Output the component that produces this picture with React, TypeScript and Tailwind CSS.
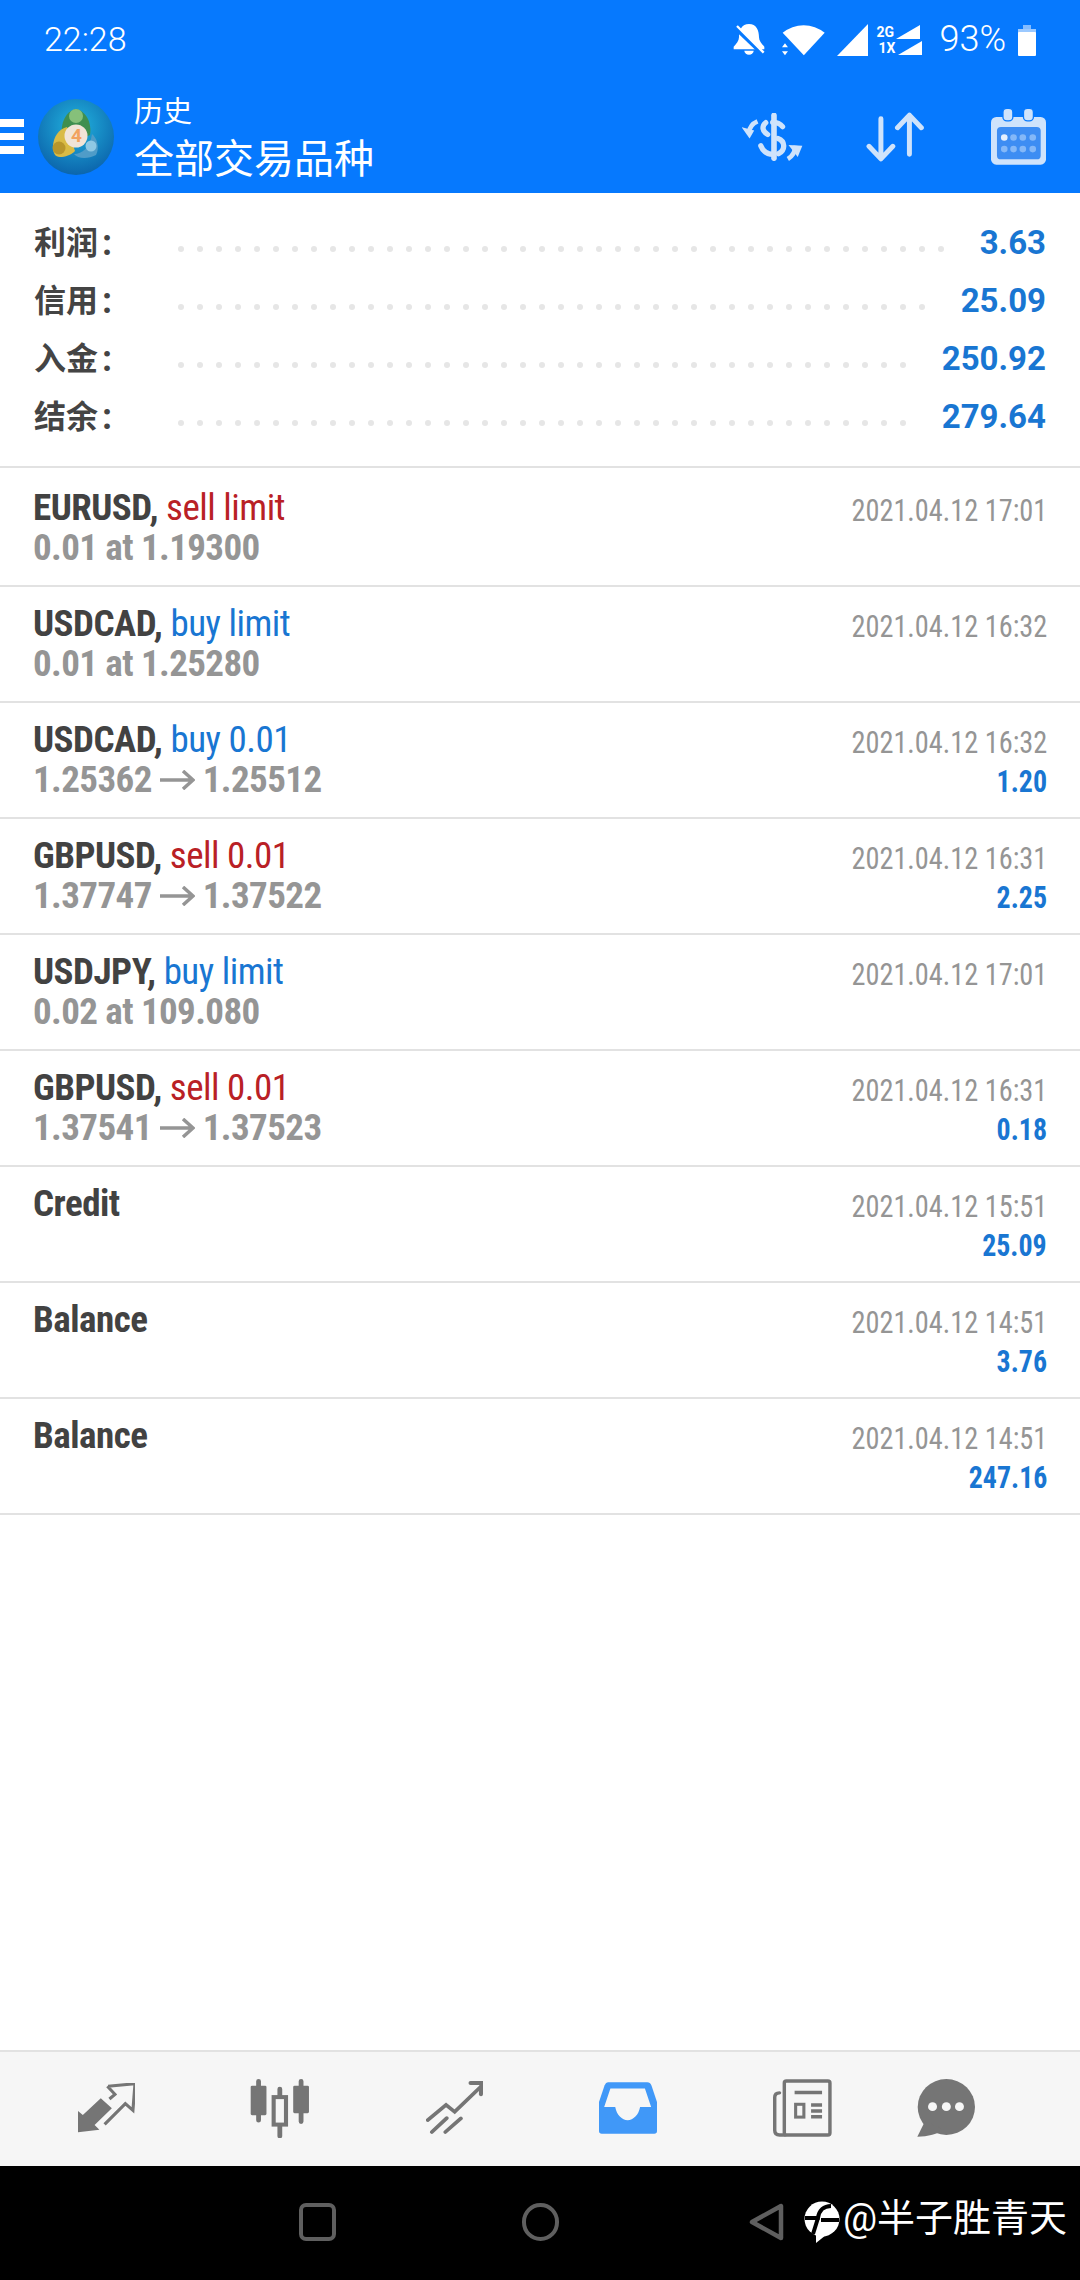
const cjk = "font-['Roboto','Noto_Sans_CJK_SC',sans-serif]"

const summary = [
  { label: "利润", value: "3.63", dots: 41 },
  { label: "信用", value: "25.09", dots: 40 },
  { label: "入金", value: "250.92", dots: 39 },
  { label: "结余", value: "279.64", dots: 39 },
]

type Deal = { pair: string; action?: string; tone?: "buy" | "sell"; detail?: string; date: string; amount?: string }

const deals: Deal[] = [
  { pair: "EURUSD,", action: "sell limit", tone: "sell", detail: "0.01 at 1.19300", date: "2021.04.12 17:01" },
  { pair: "USDCAD,", action: "buy limit", tone: "buy", detail: "0.01 at 1.25280", date: "2021.04.12 16:32" },
  { pair: "USDCAD,", action: "buy 0.01", tone: "buy", detail: "1.25362 → 1.25512", date: "2021.04.12 16:32", amount: "1.20" },
  { pair: "GBPUSD,", action: "sell 0.01", tone: "sell", detail: "1.37747 → 1.37522", date: "2021.04.12 16:31", amount: "2.25" },
  { pair: "USDJPY,", action: "buy limit", tone: "buy", detail: "0.02 at 109.080", date: "2021.04.12 17:01" },
  { pair: "GBPUSD,", action: "sell 0.01", tone: "sell", detail: "1.37541 → 1.37523", date: "2021.04.12 16:31", amount: "0.18" },
  { pair: "Credit", date: "2021.04.12 15:51", amount: "25.09" },
  { pair: "Balance", date: "2021.04.12 14:51", amount: "3.76" },
  { pair: "Balance", date: "2021.04.12 14:51", amount: "247.16" },
]

function StatusBar() {
  return (
    <div className="h-[80px] flex items-center text-white">
      <span className="ml-[44px] mb-[2px] text-[34px] font-light font-['Roboto',sans-serif]">22:28</span>
      <div className="ml-auto flex items-center">
        <svg viewBox="100 72 96 96" className="w-[32px] h-[32px]">
          <path d="M148 72c-22 0-30 18-30 40 0 10-8 20-16 28v8h92v-8c-8-8-16-18-16-28 0-22-8-40-30-40z" fill="white" />
          <path d="M134 152a14 12 0 0 0 28 0z" fill="white" />
          <path d="M104 80l88 84" stroke="#0679fe" strokeWidth="14" />
          <path d="M112 78l80 80" stroke="white" strokeWidth="7" />
        </svg>
        <svg viewBox="245 72 130 96" className="ml-[17px] w-[43px] h-[32px]">
          <path d="M247 98a100 100 0 0 1 127 0l-63 68z" fill="white" />
          <path d="M254 130l9 12h-18zM254 166l9-12h-18z" fill="white" />
        </svg>
        <svg viewBox="0 0 31 32" className="ml-[12px] w-[31px] h-[32px]">
          <path d="M31 0v32H0z" fill="white" />
        </svg>
        <div className="ml-[9px] flex flex-col text-[14px] leading-[16px] font-bold font-['Roboto',sans-serif]">
          <span className="flex items-center">2G<svg viewBox="0 0 24 14" className="ml-[2px] w-[24px] h-[14px]"><path d="M24 0v14H0z" fill="white" /></svg></span>
          <span className="flex items-center pl-[2px]">1X<svg viewBox="0 0 24 14" className="ml-[3px] w-[24px] h-[14px]"><path d="M24 0v14H0z" fill="white" /></svg></span>
        </div>
        <span className="ml-[17px] mb-[2px] text-[36px] font-light font-['Roboto',sans-serif]">93%</span>
        <svg viewBox="0 0 18 31" className="ml-[12px] mr-[44px] w-[18px] h-[31px]">
          <rect x="5" y="0" width="8" height="4" fill="white" opacity="0.5" />
          <rect x="0" y="4" width="18" height="4" fill="white" opacity="0.6" />
          <rect x="0" y="7" width="18" height="24" rx="1" fill="white" />
        </svg>
      </div>
    </div>
  )
}

function Mt4Logo() {
  return (
    <div className="relative w-[76px] h-[76px] shrink-0">
      <svg viewBox="0 0 76 76" className="w-[76px] h-[76px]">
        <defs>
          <radialGradient id="mt" cx="50%" cy="35%" r="70%">
            <stop offset="0%" stopColor="#22b4df" />
            <stop offset="100%" stopColor="#0a5fa8" />
          </radialGradient>
        </defs>
        <circle cx="38" cy="38" r="38" fill="url(#mt)" />
        <path d="M24 38c-2-14 4-26 14-28 10 2 16 14 14 26l-14 6z" fill="#3f8f4f" />
        <circle cx="38" cy="17" r="7" fill="#86c07a" />
        <path d="M15 48c0-10 6-18 14-20l8 24c-4 4-10 6-15 6s-7-4-7-10z" fill="#d9bb45" />
        <circle cx="21" cy="49" r="6.5" fill="#b8962c" />
        <path d="M36 55c8 0 16-6 18-20 5 4 8 14 4 21-8 4-18 4-22-1z" fill="#4f9cc8" />
        <circle cx="53" cy="47" r="5.5" fill="#8fc8e4" />
        <circle cx="38" cy="37" r="11.5" fill="#f1e4d6" />
      </svg>
      <span className="absolute left-[33px] top-[24px] text-[19px] leading-[26px] font-bold text-[#f2a260] font-['Roboto',sans-serif]">4</span>
    </div>
  )
}

function Header() {
  return (
    <div className="h-[193px] shrink-0 bg-[#0679fe]">
      <StatusBar />
      <div className="h-[113px] flex items-center">
        <div className="w-[24px] h-[35px] flex flex-col justify-between">
          <div className="h-[8px] bg-white" />
          <div className="h-[7px] bg-white" />
          <div className="h-[8px] bg-white" />
        </div>
        <div className="ml-[14px]">
          <Mt4Logo />
        </div>
        <div className={`ml-[20px] text-white ${cjk}`}>
          <div className="text-[29px] leading-[40px]">历史</div>
          <div className="mt-[6px] text-[40px] leading-[44px]">全部交易品种</div>
        </div>
        <div className="ml-auto mr-[34px] flex items-center">
          <svg viewBox="125 335 185 145" className="w-[61px] h-[48px]" fill="none" stroke="#cfe3fb">
            <path d="M222 342v130" strokeWidth="17" strokeLinecap="round" />
            <path d="M248 376c-8-10-18-13-30-13M197 364c-12 10-12 26 6 36M182 434c6 16 20 26 38 26M234 412c22 8 24 34 2 46" strokeWidth="16" strokeLinecap="round" />
            <path d="M172 360c-14 6-24 16-26 34" strokeWidth="14" />
            <path d="M124 378l38 10-14 24z" fill="#cfe3fb" stroke="none" />
            <path d="M264 474c14-8 22-22 24-40" strokeWidth="14" />
            <path d="M266 432l42 2-14 34z" fill="#cfe3fb" stroke="none" />
          </svg>
          <svg viewBox="497 335 175 150" className="ml-[63px] w-[58px] h-[50px]" fill="none" stroke="#cfe3fb" strokeWidth="15" strokeLinecap="round" strokeLinejoin="round">
            <path d="M542 355v120M506 438l36 38 36-38" />
            <path d="M628 462V345M592 382l36-38 36 38" />
          </svg>
          <svg viewBox="872 322 166 170" className="ml-[67px] w-[55px] h-[57px]">
            <rect x="872" y="348" width="166" height="144" rx="16" fill="#cfe3fb" />
            <rect x="890" y="378" width="132" height="98" rx="12" fill="#3d8df3" />
            <rect x="908" y="322" width="30" height="38" rx="12" fill="#cfe3fb" stroke="#0679fe" strokeWidth="4" />
            <rect x="970" y="322" width="30" height="38" rx="12" fill="#cfe3fb" stroke="#0679fe" strokeWidth="4" />
            <circle cx="912" cy="410" r="10" fill="#e6f0fd" />
            {[940, 968, 998].map((x) => (
              <circle key={x} cx={x} cy="410" r="10" fill="#84b8f8" />
            ))}
            {[912, 940, 968, 998].map((x) => (
              <circle key={x} cx={x} cy="445" r="10" fill="#84b8f8" />
            ))}
          </svg>
        </div>
      </div>
    </div>
  )
}

function Summary() {
  return (
    <div className="h-[275px] shrink-0 box-border border-b-2 border-[#e2e2e2] pt-[27px] pl-[34px] pr-[34px]">
      {summary.map((row) => (
        <div key={row.label} className="h-[58px] flex items-center">
          <span className={`w-[144px] shrink-0 pb-[13px] flex items-center text-[32px] font-bold text-[#444444] ${cjk}`}>
            {row.label}
            <span className="ml-[4px] text-[36px] leading-[36px]">:</span>
          </span>
          <div className="flex gap-[13px]">
            {Array.from({ length: row.dots }).map((_, i) => (
              <div key={i} className="w-[6px] h-[6px] rounded-full bg-[#e6e6e6]" />
            ))}
          </div>
          <span className="ml-auto pb-[12px] text-[33px] font-bold text-[#1976d2] font-['Roboto',sans-serif]">{row.value}</span>
        </div>
      ))}
    </div>
  )
}

function Detail({ text }: { text: string }) {
  const parts = text.split(" → ")
  if (parts.length < 2) return <>{text}</>
  return (
    <span className="flex items-center">
      {parts[0]}
      <svg viewBox="0 0 35 20" className="ml-[8px] mr-[8px] w-[35px] h-[20px]" fill="none" stroke="#959595" strokeWidth="3.5">
        <path d="M0 10h33M23 1l10 9-10 9" />
      </svg>
      {parts[1]}
    </span>
  )
}

function DealRow({ deal, first }: { deal: Deal; first: boolean }) {
  const tone = deal.tone === "sell" ? "text-[#b92025]" : "text-[#1976d2]"
  return (
    <div
      className={`shrink-0 box-border border-b-2 border-[#e2e2e2] flex justify-between pl-[33px] pr-[33px] font-['Roboto',sans-serif] [font-stretch:75%] ${
        first ? "h-[119px] pt-[20px]" : "h-[116px] pt-[17px]"
      }`}
    >
      <div className="leading-[39px] text-[37px]">
        <div className="h-[39px] font-bold text-[#424242] whitespace-pre tracking-[-0.5px]">
          {deal.pair}
          {deal.action && <span className={`font-normal ${tone}`}> {deal.action}</span>}
        </div>
        {deal.detail && (
          <div className="h-[39px] mt-[1px] font-bold text-[#959595] whitespace-pre tracking-[-0.6px]">
            <Detail text={deal.detail} />
          </div>
        )}
      </div>
      <div className="pt-[3px] flex flex-col items-end leading-[39px]">
        <div className="h-[39px] text-[32px] text-[#959595] origin-right scale-x-[0.885]">{deal.date}</div>
        {deal.amount && <div className="h-[39px] text-[31px] font-bold text-[#1976d2] origin-right scale-x-[0.9]">{deal.amount}</div>}
      </div>
    </div>
  )
}

function BottomNav() {
  const cell = "w-[174px] flex justify-center"
  return (
    <div className="h-[116px] shrink-0 box-border border-t-2 border-[#e2e2e2] bg-[#f6f6f6] flex pl-[19px] pt-[27px]">
      <div className={cell}>
        <svg viewBox="225 160 165 150" preserveAspectRatio="none" className="mt-[4px] w-[57px] h-[50px]">
          <path d="M225 308v-64l14 12 52-50 32 30-50 50 14 14z" fill="#757575" />
          <path d="M312 170l78-8-6 80-22-20-60 62M316 208l16-14-22-24" fill="none" stroke="#757575" strokeWidth="9" />
        </svg>
      </div>
      <div className={cell}>
        <svg viewBox="725 145 175 176" preserveAspectRatio="none" className="w-[60px] h-[59px]" stroke="#757575" strokeLinecap="round">
          <path d="M750 152v116M874 152v120M812 175v140" strokeWidth="14" fill="none" />
          <rect x="727" y="165" width="46" height="88" rx="4" fill="#757575" stroke="none" />
          <rect x="851" y="165" width="46" height="82" rx="4" fill="#757575" stroke="none" />
          <rect x="794" y="199" width="36" height="82" fill="#f6f6f6" strokeWidth="12" strokeLinecap="butt" />
        </svg>
      </div>
      <div className={cell}>
        <svg viewBox="1235 150 165 160" preserveAspectRatio="none" className="mt-[2px] w-[57px] h-[53px]" fill="none" stroke="#757575" strokeWidth="11" strokeLinecap="round">
          <path d="M1240 268l53-46 25 21 74-74" />
          <path d="M1364 156h32l-2 34" strokeWidth="12" />
          <path d="M1252 304l43-42M1291 304l45-41" />
        </svg>
      </div>
      <div className={cell}>
        <svg viewBox="172 152 168 158" preserveAspectRatio="none" className="mt-[3px] w-[58px] h-[52px]">
          <path d="M198 153h114q8 0 12 10l16 50v88q0 8-8 8H180q-8 0-8-8v-88l16-50q4-10 10-10z" fill="#4098f8" />
          <path d="M205 172h100l18 56h-32c-4 24-20 40-36 40s-32-16-36-40h-32z" fill="#f6f6f6" />
        </svg>
      </div>
      <div className={cell}>
        <svg viewBox="677 145 172 172" preserveAspectRatio="none" className="w-[59px] h-[58px]" fill="none" stroke="#757575" strokeWidth="10">
          <rect x="710" y="151" width="133" height="160" rx="6" />
          <path d="M696 186c-9 0-14 5-14 14v97c0 9 5 14 14 14h16" strokeLinecap="round" />
          <path d="M740 185h80M788 222h32M788 240h32M788 257h32" />
          <rect x="743" y="220" width="24" height="38" strokeWidth="9" />
        </svg>
      </div>
      <div className={`${cell} -ml-[30px]`}>
        <svg viewBox="1095 145 168 172" preserveAspectRatio="none" className="w-[58px] h-[58px]">
          <circle cx="1180" cy="228" r="83" fill="#757575" />
          <path d="M1118 270l-22 46c30 0 60-8 76-22z" fill="#757575" />
          <circle cx="1140" cy="227" r="13" fill="#f6f6f6" />
          <circle cx="1180" cy="227" r="13" fill="#f6f6f6" />
          <circle cx="1218" cy="227" r="13" fill="#f6f6f6" />
        </svg>
      </div>
    </div>
  )
}

function SystemBar() {
  return (
    <div className="h-[114px] shrink-0 bg-black flex items-center pb-[2px]">
      <div className="ml-[299px] w-[37px] h-[38px] rounded-[7px] border-[4px] border-[#5f5f5f]" />
      <div className="ml-[186px] w-[37px] h-[38px] rounded-full border-[4px] border-[#5f5f5f]" />
      <svg viewBox="0 0 35 38" className="ml-[190px] w-[35px] h-[38px]" fill="none" stroke="#5f5f5f" strokeWidth="4.5" strokeLinejoin="round">
        <path d="M32 3v32L3 19z" />
      </svg>
      <svg viewBox="0 0 36 42" className="ml-[20px] w-[36px] h-[42px]">
        <circle cx="18" cy="18" r="17.5" fill="white" />
        <path d="M12 30l20-4-20 16z" fill="white" />
        <path d="M1 17h13c1-8 6-12 13-12M14 17l-5 16M17 19h18" fill="none" stroke="black" strokeWidth="4" />
      </svg>
      <span className={`ml-[3px] mb-[9px] text-[38px] leading-[40px] text-white whitespace-nowrap ${cjk}`}>@半子胜青天</span>
    </div>
  )
}

export default function App() {
  return (
    <div className="w-[1080px] h-[2280px] flex flex-col bg-white overflow-hidden">
      <Header />
      <Summary />
      {deals.map((deal, i) => (
        <DealRow key={i} deal={deal} first={i === 0} />
      ))}
      <div className="flex-1" />
      <BottomNav />
      <SystemBar />
    </div>
  )
}
